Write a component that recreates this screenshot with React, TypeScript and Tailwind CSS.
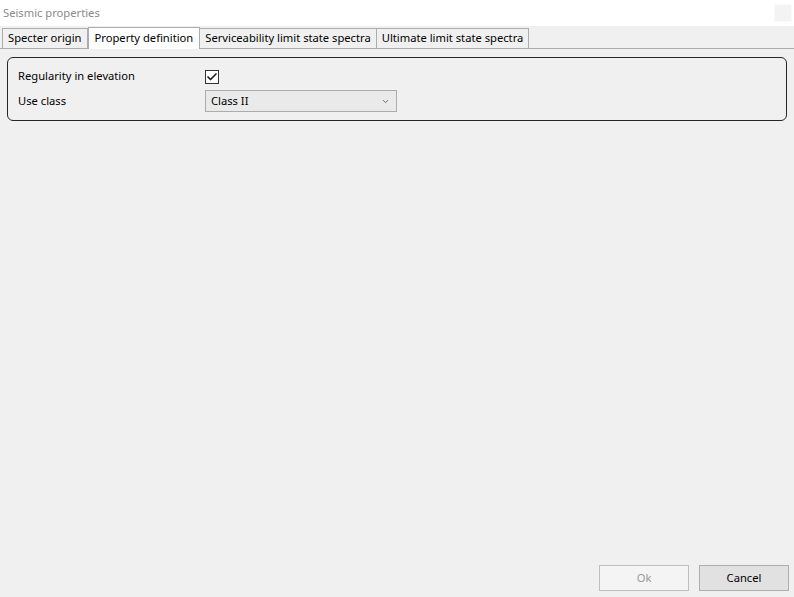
import { Check, ChevronDown } from 'lucide-react';

const tabs = ['Specter origin', 'Property definition', 'Serviceability limit state spectra', 'Ultimate limit state spectra'];

export default function App() {
  const active = 1;

  return (
    <div className="w-[794px] h-[597px] bg-[#f0f0f0] flex flex-col text-[11.2px] text-black font-['Segoe_UI','Noto_Sans',sans-serif] overflow-hidden">
      {/* title bar */}
      <div className="h-[26px] bg-white flex items-center justify-between pl-[3px] pr-[2px] shrink-0">
        <span className="text-[#8a8a8a]">Seismic properties</span>
        <div className="w-[18px] h-[18px] bg-[#f3f3f3] border border-[#fafafa]" />
      </div>

      {/* tab strip */}
      <div className="flex items-end pl-[2px] pt-[1px] border-b border-[#acacac] h-[23px] shrink-0">
        {tabs.map((t, i) =>
          i === active ? (
            <div
              key={t}
              className="h-[22px] -mb-px bg-white border border-b-0 border-[#acacac] px-[6px] flex items-center"
            >
              {t}
            </div>
          ) : (
            <div
              key={t}
              className="h-[20px] bg-[#f0f0f0] border border-b-0 border-[#acacac] -ml-px first:ml-0 px-[5px] flex items-center"
            >
              {t}
            </div>
          )
        )}
      </div>

      {/* property group */}
      <div className="mx-[7px] mt-[8px] border border-[#262626] rounded-[6px] pt-[11px] pb-[8px] pl-[10px] flex flex-col gap-[6px]">
        <div className="flex items-center h-[15px]">
          <span className="w-[187px]">Regularity in elevation</span>
          <div className="w-[14px] h-[14px] bg-white border border-[#333] flex items-center justify-center">
            <Check size={12} strokeWidth={3.5} className="text-[#202020]" />
          </div>
        </div>
        <div className="flex items-center h-[22px]">
          <span className="w-[187px]">Use class</span>
          <div className="w-[192px] h-[22px] bg-[#eaeaea] border border-[#acacac] flex items-center justify-between pl-[5px] pr-[6px]">
            <span>Class II</span>
            <ChevronDown size={9} strokeWidth={2} className="text-[#444]" />
          </div>
        </div>
      </div>

      <div className="flex-1" />

      {/* dialog buttons */}
      <div className="flex justify-end gap-[10px] pr-[5px] pb-[6px]">
        <button className="w-[90px] h-[26px] bg-[#f4f4f4] border border-[#bfbfbf] text-[#9a9a9a]">Ok</button>
        <button className="w-[90px] h-[26px] bg-[#e1e1e1] border border-[#adadad]">Cancel</button>
      </div>
    </div>
  );
}
